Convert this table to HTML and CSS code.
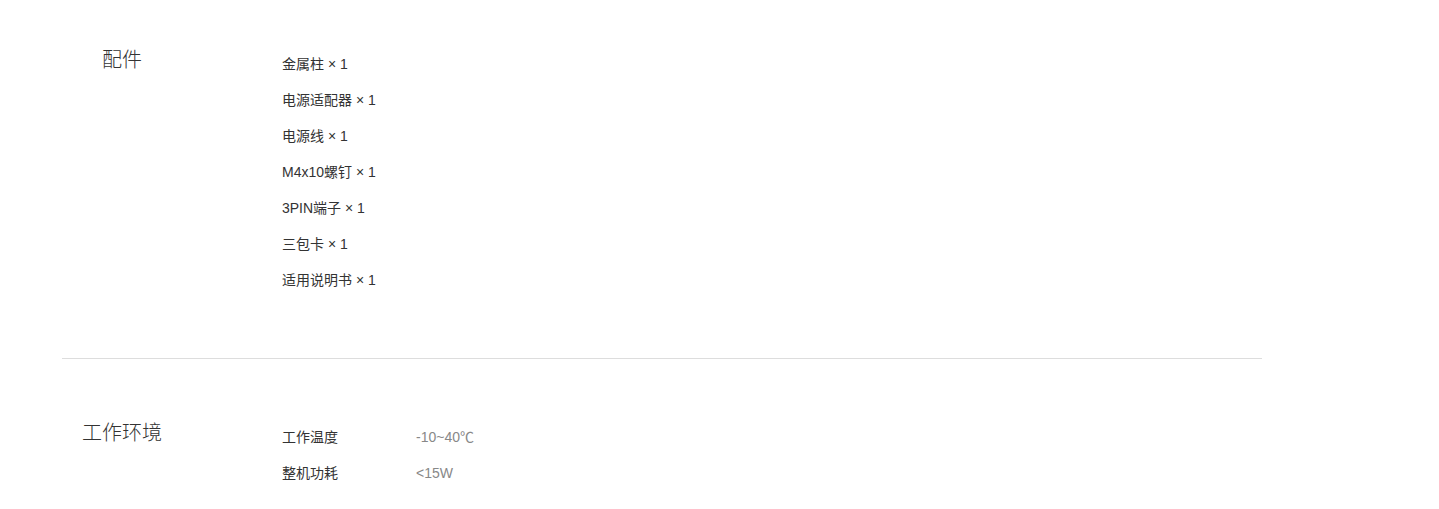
FILE: index.html
```html
<!DOCTYPE html>
<html lang="zh-CN">
<head>
  <meta charset="UTF-8" />
  <meta name="viewport" content="width=1439, initial-scale=1.0" />
  <title>规格参数</title>
  <link rel="stylesheet" href="styles.css">
</head>
<body>
  <div class="specs">
    <section class="spec-section">
      <h3 class="spec-title">配件</h3>
      <ul class="spec-list">
        <li>金属柱 × 1</li>
        <li>电源适配器 × 1</li>
        <li>电源线 × 1</li>
        <li>M4x10螺钉 × 1</li>
        <li>3PIN端子 × 1</li>
        <li>三包卡 × 1</li>
        <li>适用说明书 × 1</li>
      </ul>
    </section>

    <section class="spec-section">
      <h3 class="spec-title">工作环境</h3>
      <ul class="spec-list">
        <li><span class="spec-name">工作温度</span><span class="spec-value">-10~40℃</span></li>
        <li><span class="spec-name">整机功耗</span><span class="spec-value">&lt;15W</span></li>
      </ul>
    </section>
  </div>
</body>
</html>
```

FILE: styles.css
```css
html, body {
  margin: 0;
  padding: 0;
  background: #fff;
  color: #333;
  font-family: "Liberation Sans", "Noto Sans CJK SC", sans-serif;
}

.specs {
  width: 1200px;
  margin-left: 62px;
}

.spec-section {
  display: flex;
  padding: 60px 0;
  border-top: 1px solid #ddd;
}

.spec-section:first-child {
  padding-top: 46px;
  border-top: none;
}

.spec-title {
  width: 120px;
  margin: 0 100px 0 0;
  font-size: 20px;
  font-weight: 300;
  line-height: 28px;
  text-align: center;
  color: #333;
}

.spec-list {
  list-style: none;
  margin: 0;
  padding: 0;
  font-size: 14px;
}

.spec-list li {
  display: flex;
  line-height: 36px;
}

.spec-name {
  width: 134px;
}

.spec-value {
  color: #888;
}
```
